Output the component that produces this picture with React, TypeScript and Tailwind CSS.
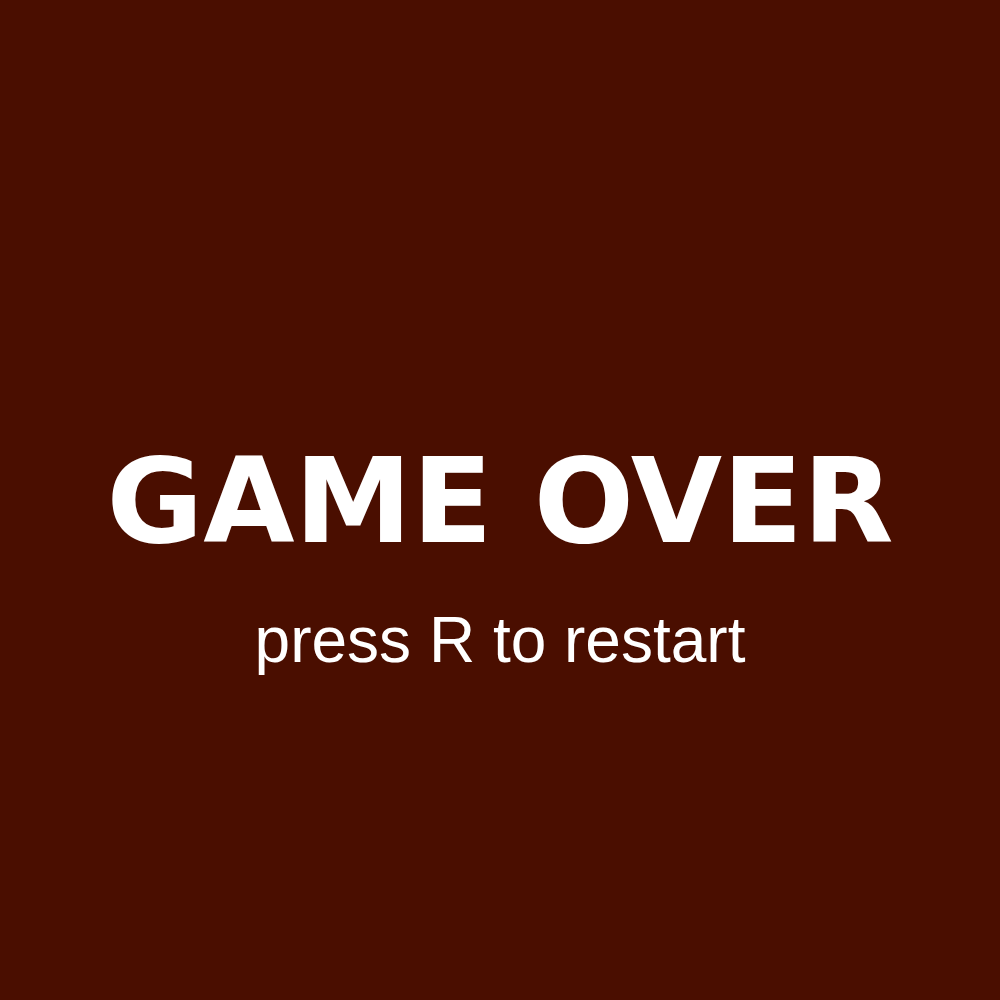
export default function App() {
  return (
    <div className="flex h-screen w-full flex-col items-center bg-[#4a0e00] pt-[442px] text-white">
      <h1 className="text-[118px] font-bold leading-none font-['DejaVu_Sans',sans-serif]">
        GAME OVER
      </h1>
      <p className="mt-[48px] text-[64px] leading-none font-['Liberation_Sans',Arial,sans-serif]">
        press R to restart
      </p>
    </div>
  );
}
